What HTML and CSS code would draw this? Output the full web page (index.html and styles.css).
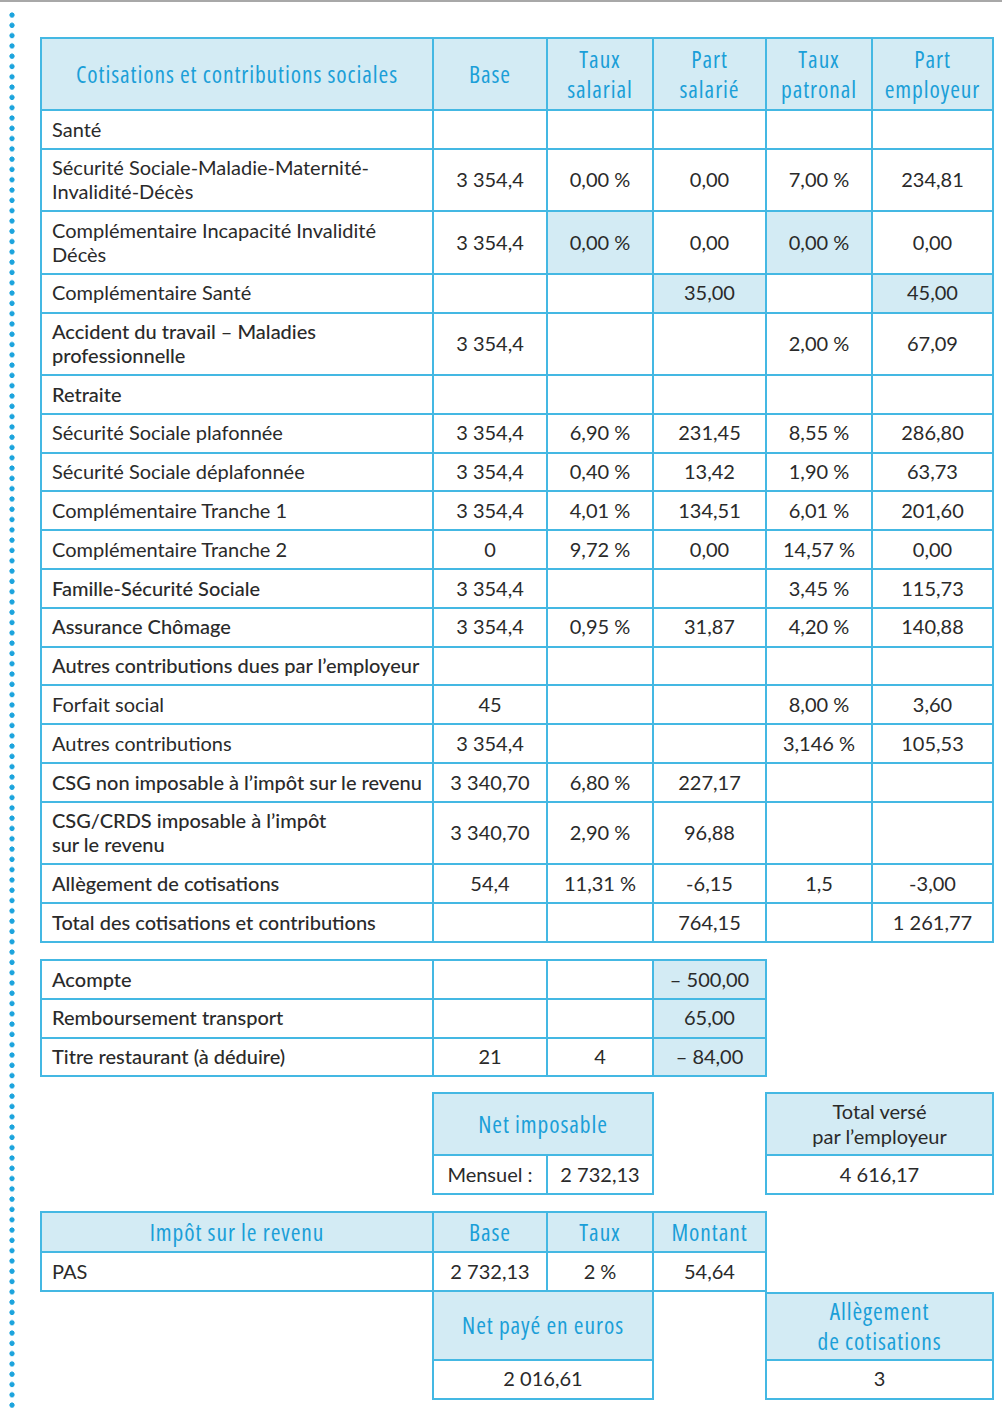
FILE: index.html
```html
<!DOCTYPE html>
<html lang="fr">
<head>
<meta charset="utf-8">
<title>Bulletin de paie</title>
<link rel="stylesheet" href="styles.css">
</head>
<body>
<div class="topline"></div>
<div class="page">
  <div class="dots"></div>
  <main class="content">
    <div class="tbl main">
      <div class="c h">Cotisations et contributions sociales</div>
      <div class="c h">Base</div>
      <div class="c h">Taux<br>salarial</div>
      <div class="c h">Part<br>salarié</div>
      <div class="c h">Taux<br>patronal</div>
      <div class="c h">Part<br>employeur</div>

      <div class="c l">Santé</div><div class="c"></div><div class="c"></div><div class="c"></div><div class="c"></div><div class="c"></div>

      <div class="c l">Sécurité Sociale-Maladie-Maternité-<br>Invalidité-Décès</div>
      <div class="c">3 354,4</div><div class="c">0,00 %</div><div class="c">0,00</div><div class="c">7,00 %</div><div class="c">234,81</div>

      <div class="c l">Complémentaire Incapacité Invalidité<br>Décès</div>
      <div class="c">3 354,4</div><div class="c hl">0,00 %</div><div class="c">0,00</div><div class="c hl">0,00 %</div><div class="c">0,00</div>

      <div class="c l">Complémentaire Santé</div>
      <div class="c"></div><div class="c"></div><div class="c hl">35,00</div><div class="c"></div><div class="c hl">45,00</div>

      <div class="c l m">Accident du travail – Maladies<br>professionnelle</div>
      <div class="c">3 354,4</div><div class="c"></div><div class="c"></div><div class="c">2,00 %</div><div class="c">67,09</div>

      <div class="c l m">Retraite</div><div class="c"></div><div class="c"></div><div class="c"></div><div class="c"></div><div class="c"></div>

      <div class="c l">Sécurité Sociale plafonnée</div>
      <div class="c">3 354,4</div><div class="c">6,90 %</div><div class="c">231,45</div><div class="c">8,55 %</div><div class="c">286,80</div>

      <div class="c l">Sécurité Sociale déplafonnée</div>
      <div class="c">3 354,4</div><div class="c">0,40 %</div><div class="c">13,42</div><div class="c">1,90 %</div><div class="c">63,73</div>

      <div class="c l">Complémentaire Tranche 1</div>
      <div class="c">3 354,4</div><div class="c">4,01 %</div><div class="c">134,51</div><div class="c">6,01 %</div><div class="c">201,60</div>

      <div class="c l">Complémentaire Tranche 2</div>
      <div class="c">0</div><div class="c">9,72 %</div><div class="c">0,00</div><div class="c">14,57 %</div><div class="c">0,00</div>

      <div class="c l m">Famille-Sécurité Sociale</div>
      <div class="c">3 354,4</div><div class="c"></div><div class="c"></div><div class="c">3,45 %</div><div class="c">115,73</div>

      <div class="c l m">Assurance Chômage</div>
      <div class="c">3 354,4</div><div class="c">0,95 %</div><div class="c">31,87</div><div class="c">4,20 %</div><div class="c">140,88</div>

      <div class="c l m">Autres contributions dues par l’employeur</div>
      <div class="c"></div><div class="c"></div><div class="c"></div><div class="c"></div><div class="c"></div>

      <div class="c l">Forfait social</div>
      <div class="c">45</div><div class="c"></div><div class="c"></div><div class="c">8,00 %</div><div class="c">3,60</div>

      <div class="c l">Autres contributions</div>
      <div class="c">3 354,4</div><div class="c"></div><div class="c"></div><div class="c">3,146 %</div><div class="c">105,53</div>

      <div class="c l m">CSG non imposable à l’impôt sur le revenu</div>
      <div class="c">3 340,70</div><div class="c">6,80 %</div><div class="c">227,17</div><div class="c"></div><div class="c"></div>

      <div class="c l m">CSG/CRDS imposable à l’impôt<br>sur le revenu</div>
      <div class="c">3 340,70</div><div class="c">2,90 %</div><div class="c">96,88</div><div class="c"></div><div class="c"></div>

      <div class="c l m">Allègement de cotisations</div>
      <div class="c">54,4</div><div class="c">11,31 %</div><div class="c">-6,15</div><div class="c">1,5</div><div class="c">-3,00</div>

      <div class="c l m">Total des cotisations et contributions</div>
      <div class="c"></div><div class="c"></div><div class="c">764,15</div><div class="c"></div><div class="c">1 261,77</div>
    </div>

    <div class="tbl four gap">
      <div class="c l m">Acompte</div><div class="c"></div><div class="c"></div><div class="c hl">– 500,00</div>
      <div class="c l m">Remboursement transport</div><div class="c"></div><div class="c"></div><div class="c hl">65,00</div>
      <div class="c l m">Titre restaurant (à déduire)</div><div class="c">21</div><div class="c">4</div><div class="c hl">– 84,00</div>
    </div>

    <div class="row gap-s">
      <div class="tbl netimp">
        <div class="c h span hb">Net imposable</div>
        <div class="c">Mensuel :</div><div class="c">2 732,13</div>
      </div>
      <div class="tbl total">
        <div class="c h dark span hb">Total versé<br>par l’employeur</div>
        <div class="c span">4 616,17</div>
      </div>
    </div>

    <div class="tbl four gap">
      <div class="c h hs">Impôt sur le revenu</div>
      <div class="c h hs">Base</div>
      <div class="c h hs">Taux</div>
      <div class="c h hs">Montant</div>
      <div class="c l">PAS</div><div class="c">2 732,13</div><div class="c">2 %</div><div class="c">54,64</div>
    </div>

    <div class="row">
      <div class="tbl netimp notop">
        <div class="c h span ht">Net payé en euros</div>
        <div class="c span">2 016,61</div>
      </div>
      <div class="tbl total">
        <div class="c h span ht2">Allègement<br>de cotisations</div>
        <div class="c span">3</div>
      </div>
    </div>
  </main>
</div>
</body>
</html>
```

FILE: styles.css
```css
html, body {
  margin: 0;
  padding: 0;
  background: #ffffff;
}

body {
  font-family: "Lato", "Liberation Sans", sans-serif;
  font-size: 20px;
  color: #2a2a2a;
}

.topline {
  height: 2px;
  background: #a8a8a8;
}

.page {
  display: flex;
  align-items: stretch;
}

.dots {
  width: 6px;
  margin-left: 9px;
  margin-top: 10px;
  background-image: radial-gradient(circle at 3px 3px, #1ca4dd 2.3px, rgba(28,164,221,0) 2.9px);
  background-size: 6px 10.3px;
  background-repeat: repeat-y;
  min-height: 1400px;
}

.content {
  margin-left: 25px;
  padding-top: 35px;
}

.tbl {
  display: grid;
  border-left: 2px solid #44b8e3;
  border-top: 2px solid #44b8e3;
  width: max-content;
}

.main {
  grid-template-columns: 392px 114px 106px 113px 106px 121px;
}

.four {
  grid-template-columns: 392px 114px 106px 113px;
}

.gap {
  margin-top: 16px;
}

.gap-s {
  margin-top: 15px;
}

.c {
  box-sizing: border-box;
  border-right: 2px solid #44b8e3;
  border-bottom: 2px solid #44b8e3;
  padding: 6.55px 4px;
  line-height: 23.7px;
  display: flex;
  align-items: center;
  justify-content: center;
  text-align: center;
  white-space: nowrap;
}

.c.l {
  justify-content: flex-start;
  text-align: left;
  padding-left: 10px;
}

.m {
  font-weight: 500;
}

.hl {
  background: #d3ebf4;
}

.h {
  background: #d3ebf4;
  color: #1b9fd8;
  font-family: "Open Sans", "Lato", sans-serif;
  font-stretch: 75%;
  font-weight: 500;
  font-size: 23.5px;
  letter-spacing: 0.9px;
  line-height: 30px;
  height: 72px;
}

.h.hs {
  height: 40px;
  padding-top: 4px;
  padding-bottom: 4px;
}

.h.dark {
  color: #2a2a2a;
  font-family: "Lato", sans-serif;
  font-stretch: normal;
  font-weight: 400;
  font-size: 20px;
  letter-spacing: 0;
  line-height: 25px;
}

.span {
  grid-column: 1 / -1;
}

.row {
  display: flex;
  align-items: flex-start;
}

.netimp {
  grid-template-columns: 114px 106px;
  margin-left: 392px;
}

.total {
  grid-template-columns: 106px 121px;
  margin-left: 111px;
}

.hb {
  height: 62px;
}

.notop {
  border-top: none;
}

.ht {
  height: 69px;
}

.ht2 {
  height: 67px;
}
```
